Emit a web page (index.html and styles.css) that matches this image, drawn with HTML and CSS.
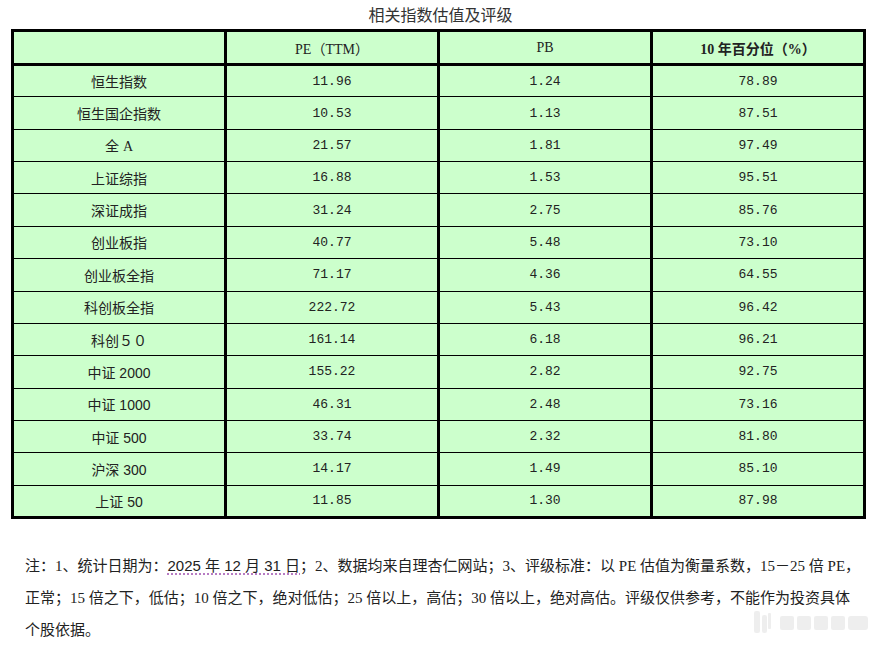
FILE: index.html
```html
<!DOCTYPE html>
<html lang="zh-CN">
<head>
<meta charset="utf-8">
<title>相关指数估值及评级</title>
<link rel="stylesheet" href="styles.css">
</head>
<body>
<h1 class="title">相关指数估值及评级</h1>
<table class="val">
  <colgroup><col class="col"><col class="col"><col class="col"><col class="col"></colgroup>
  <thead>
    <tr><th></th><th>PE（TTM）</th><th>PB</th><th class="strong">10 年百分位（%）</th></tr>
  </thead>
  <tbody>
    <tr><td class="name">恒生指数</td><td>11.96</td><td>1.24</td><td>78.89</td></tr>
    <tr><td class="name">恒生国企指数</td><td>10.53</td><td>1.13</td><td>87.51</td></tr>
    <tr><td class="name">全 <span class="serif">A</span></td><td>21.57</td><td>1.81</td><td>97.49</td></tr>
    <tr><td class="name">上证综指</td><td>16.88</td><td>1.53</td><td>95.51</td></tr>
    <tr><td class="name">深证成指</td><td>31.24</td><td>2.75</td><td>85.76</td></tr>
    <tr><td class="name">创业板指</td><td>40.77</td><td>5.48</td><td>73.10</td></tr>
    <tr><td class="name">创业板全指</td><td>71.17</td><td>4.36</td><td>64.55</td></tr>
    <tr><td class="name">科创板全指</td><td>222.72</td><td>5.43</td><td>96.42</td></tr>
    <tr><td class="name">科创５０</td><td>161.14</td><td>6.18</td><td>96.21</td></tr>
    <tr><td class="name">中证 2000</td><td>155.22</td><td>2.82</td><td>92.75</td></tr>
    <tr><td class="name">中证 1000</td><td>46.31</td><td>2.48</td><td>73.16</td></tr>
    <tr><td class="name">中证 500</td><td>33.74</td><td>2.32</td><td>81.80</td></tr>
    <tr><td class="name">沪深 300</td><td>14.17</td><td>1.49</td><td>85.10</td></tr>
    <tr><td class="name">上证 50</td><td>11.85</td><td>1.30</td><td>87.98</td></tr>
  </tbody>
</table>
<p class="note">注：1、统计日期为：<span class="date">2025 年 12 月 31 日</span>；2、数据均来自理杏仁网站；3、评级标准：以 PE 估值为衡量系数，15－25 倍 PE，<br>正常；15 倍之下，低估；10 倍之下，绝对低估；25 倍以上，高估；30 倍以上，绝对高估。评级仅供参考，不能作为投资具体<br>个股依据。</p>
<div class="watermark" aria-hidden="true">
  <svg width="124" height="30" viewBox="0 0 124 30">
    <g fill="#e4e4e4">
      <rect x="4" y="4" width="6" height="22" rx="2"/>
      <rect x="12" y="8" width="5" height="18" rx="2"/>
      <rect x="18" y="6" width="3" height="16" rx="1"/>
      <rect x="30" y="9" width="14" height="14" rx="2"/>
      <rect x="47" y="9" width="14" height="14" rx="2"/>
      <rect x="64" y="9" width="14" height="14" rx="2"/>
      <rect x="81" y="9" width="14" height="14" rx="2"/>
      <rect x="98" y="9" width="20" height="14" rx="3"/>
    </g>
  </svg>
</div>
</body>
</html>
```
FILE: styles.css
```css
html, body {
  margin: 0;
  padding: 0;
  background: #ffffff;
}
body {
  color: #222222;
  position: relative;
  width: 881px;
  height: 645px;
  overflow: hidden;
}
.title {
  margin: 0;
  height: 29px;
  line-height: 29px;
  text-align: center;
  font-family: "Noto Sans CJK SC", sans-serif;
  font-size: 16px;
  font-weight: normal;
  color: #333333;
}
.val {
  margin-left: 11px;
  width: 855px;
  border-collapse: collapse;
  table-layout: fixed;
  border: 3px solid #000000;
  background: #ccffcc;
}
.col {
  width: 213px;
}
.val th,
.val td {
  padding: 0;
  text-align: center;
  vertical-align: middle;
  border-left: 3px solid #000000;
  border-right: 3px solid #000000;
  border-top: 1px solid #000000;
  border-bottom: 1px solid #000000;
}
.val thead tr {
  height: 34px;
}
.val thead th {
  border-bottom: 3px solid #000000;
  font-family: "Liberation Serif", "Noto Sans CJK SC", serif;
  font-size: 14px;
  font-weight: normal;
  color: #222222;
}
.val thead th.strong {
  font-weight: bold;
}
.val tbody tr {
  height: 32.36px;
}
.val td {
  font-family: "Liberation Mono", monospace;
  font-size: 13px;
  color: #222222;
}
.val td.name {
  font-family: "Liberation Sans", "Noto Sans CJK SC", sans-serif;
  font-size: 14px;
}
.serif {
  font-family: "Liberation Serif", serif;
}
.note {
  margin: 31px 0 0 25px;
  font-family: "Liberation Serif", "Noto Sans CJK SC", serif;
  font-size: 15px;
  line-height: 32px;
  color: #222222;
  white-space: nowrap;
}
.date {
  font-family: "Liberation Sans", "Noto Sans CJK SC", sans-serif;
  text-decoration: underline dotted #a050b0;
  text-underline-offset: 3px;
}
.watermark {
  position: absolute;
  left: 750px;
  top: 607px;
  opacity: 0.6;
}
```
